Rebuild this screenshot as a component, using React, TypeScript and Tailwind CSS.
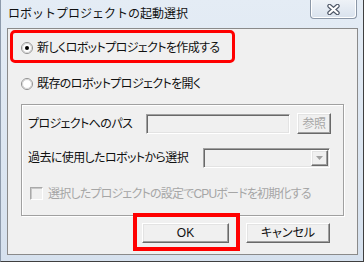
const font = "font-['Liberation_Sans','Noto_Sans_CJK_JP',sans-serif] [font-feature-settings:'palt']"

function Radio({ checked }: { checked?: boolean }) {
  return (
    <svg width="12" height="12" viewBox="0 0 12 12" className="shrink-0">
      <circle cx="6" cy="6" r="5.5" fill="#fff" stroke="#8f8f8f" />
      <circle cx="6" cy="6" r="4.5" fill="none" stroke="#d4d4d4" />
      {checked && <circle cx="6" cy="6" r="2" fill="#000" />}
    </svg>
  )
}

const sunken =
  'border border-t-[#a0a0a0] border-l-[#a0a0a0] border-b-white border-r-white shadow-[inset_1px_1px_0_#696969,inset_-1px_-1px_0_#e3e3e3]'

const raised =
  'border border-t-white border-l-white border-b-[#696969] border-r-[#696969] shadow-[inset_-1px_-1px_0_#a0a0a0,inset_1px_1px_0_#e3e3e3] bg-[#f0f0f0]'

export default function App() {
  return (
    <div
      className={`w-[364px] h-[262px] flex flex-col bg-gradient-to-b from-[#e4ecf5] to-[#d6e1ee] border-l border-l-[#8d9aab] border-r border-r-[#3f3f3f] border-b border-b-[#3f3f3f] pl-[6px] pr-[5px] text-[12px] text-[#111] ${font}`}
    >
      {/* Title bar */}
      <div className="h-[28px] flex items-start shrink-0">
        <span className="ml-[1px] mt-[8px] leading-[12px] [font-feature-settings:normal]">
          ロボットプロジェクトの起動選択
        </span>
        <div className="ml-auto mr-[1px] w-[47px] h-[19px] flex items-center justify-center border border-t-0 border-[#8b97a7] rounded-b-[4px] bg-gradient-to-b from-[#eef2f7] to-[#d9e2ed] shadow-[inset_1px_0_0_#fff,inset_-1px_-1px_0_#fff]">
          <svg width="15" height="11" viewBox="0 0 15 11">
            <path d="M3.5 2 L11.5 9 M11.5 2 L3.5 9" stroke="#4f5868" strokeWidth="4.4" strokeLinecap="round" />
            <path d="M3.5 2 L11.5 9 M11.5 2 L3.5 9" stroke="#fff" strokeWidth="2.2" strokeLinecap="round" />
          </svg>
        </div>
      </div>

      {/* Client area */}
      <div className="h-[227px] shrink-0 border border-[#8a8a8a] bg-[#f0f0f0] flex flex-col pl-[2px] pt-[1px] tracking-[-0.6px]">
        <div className="w-[225px] h-[33px] border-[3px] border-[#ff0000] rounded-[5px] flex items-center gap-[4px] pl-[8px] pt-[2px]">
          <Radio checked />
          <span className="leading-[14px]">新しくロボットプロジェクトを作成する</span>
        </div>

        <div className="mt-[13px] ml-[11px] h-[16px] flex items-center gap-[4px]">
          <Radio />
          <span className="leading-[14px]">既存のロボットプロジェクトを開く</span>
        </div>

        <div className="mt-[12px] ml-[11px] w-[323px] h-[112px] border border-[#a0a0a0] shadow-[1px_1px_0_#fff,inset_1px_1px_0_#fff] flex flex-col pl-[6px] pt-[8px]">
          <div className="h-[21px] flex items-center">
            <span className="w-[118px] leading-[14px]">プロジェクトへのパス</span>
            <div className={`w-[144px] h-[20px] bg-[#f0f0f0] ${sunken}`} />
            <div className={`ml-[7px] w-[34px] h-[21px] flex items-center justify-center text-[#a6a6a6] ${raised}`}>
              参照
            </div>
          </div>

          <div className="mt-[14px] h-[20px] flex items-center">
            <span className="w-[175px] leading-[14px]">過去に使用したロボットから選択</span>
            <div className={`w-[127px] h-[20px] bg-[#f0f0f0] flex justify-end p-[1px] ${sunken}`}>
              <div className={`w-[17px] h-full flex items-center justify-center ${raised}`}>
                <svg width="7" height="4" viewBox="0 0 7 4">
                  <path d="M0 0 H7 L3.5 4 Z" fill="#a0a0a0" />
                </svg>
              </div>
            </div>
          </div>

          <div className="mt-[19px] ml-[2px] h-[13px] flex items-center gap-[5px]">
            <div className="w-[13px] h-[13px] bg-[#f0f0f0] border border-t-[#a9a9a9] border-l-[#a9a9a9] border-b-white border-r-white shadow-[inset_1px_1px_0_#c8c8c8]" />
            <span className="leading-[14px] text-[#a6a6a6] tracking-[-0.8px]">
              選択したプロジェクトの設定でCPUボードを初期化する
            </span>
          </div>
        </div>

        <div className="mt-[7px] ml-[132px] flex gap-[17px] tracking-normal">
          <div className="relative">
            <div className={`w-[87px] h-[20px] flex items-center justify-center ${raised}`}>OK</div>
            <div className="absolute -left-[9px] -top-[10px] w-[107px] h-[38px] border-4 border-[#ff0000]" />
          </div>
          <div className={`w-[84px] h-[20px] flex items-center justify-center ${raised}`}>キャンセル</div>
        </div>
      </div>
    </div>
  )
}
